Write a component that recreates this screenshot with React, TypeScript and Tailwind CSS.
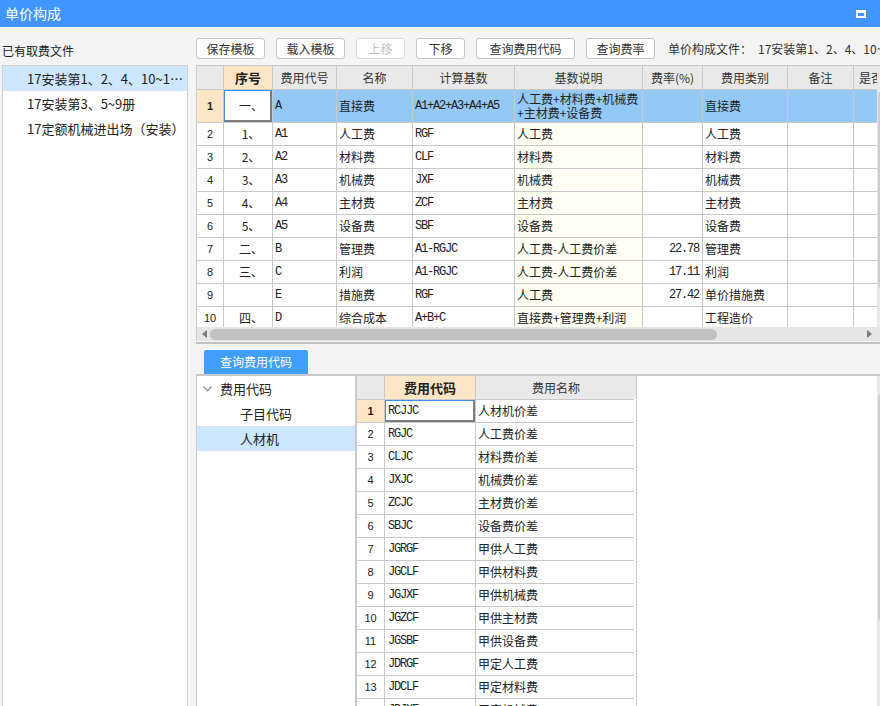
import React from "react"

const MONO = "font-['Liberation_Mono','Noto_Sans_CJK_SC',monospace] text-[12px] tracking-[-1.2px]"
const NUM = "font-['Liberation_Sans',sans-serif] text-[11px]"
const FOCUS = "bg-white shadow-[inset_1px_1px_0_#3d8fe8,inset_-2px_-2px_0_#7d7d7d]"

type Row = {
  seq: string
  code: string
  name: string
  base: string
  desc: React.ReactNode
  rate: string
  kind: string
}

const topRows: Row[] = [
  { seq: "一、", code: "A", name: "直接费", base: "A1+A2+A3+A4+A5", desc: <>人工费+材料费+机械费<br />+主材费+设备费</>, rate: "", kind: "直接费" },
  { seq: "1、", code: "A1", name: "人工费", base: "RGF", desc: "人工费", rate: "", kind: "人工费" },
  { seq: "2、", code: "A2", name: "材料费", base: "CLF", desc: "材料费", rate: "", kind: "材料费" },
  { seq: "3、", code: "A3", name: "机械费", base: "JXF", desc: "机械费", rate: "", kind: "机械费" },
  { seq: "4、", code: "A4", name: "主材费", base: "ZCF", desc: "主材费", rate: "", kind: "主材费" },
  { seq: "5、", code: "A5", name: "设备费", base: "SBF", desc: "设备费", rate: "", kind: "设备费" },
  { seq: "二、", code: "B", name: "管理费", base: "A1-RGJC", desc: "人工费-人工费价差", rate: "22.78", kind: "管理费" },
  { seq: "三、", code: "C", name: "利润", base: "A1-RGJC", desc: "人工费-人工费价差", rate: "17.11", kind: "利润" },
  { seq: "", code: "E", name: "措施费", base: "RGF", desc: "人工费", rate: "27.42", kind: "单价措施费" },
  { seq: "四、", code: "D", name: "综合成本", base: "A+B+C", desc: "直接费+管理费+利润", rate: "", kind: "工程造价" },
]

const codeRows = [
  ["RCJJC", "人材机价差"],
  ["RGJC", "人工费价差"],
  ["CLJC", "材料费价差"],
  ["JXJC", "机械费价差"],
  ["ZCJC", "主材费价差"],
  ["SBJC", "设备费价差"],
  ["JGRGF", "甲供人工费"],
  ["JGCLF", "甲供材料费"],
  ["JGJXF", "甲供机械费"],
  ["JGZCF", "甲供主材费"],
  ["JGSBF", "甲供设备费"],
  ["JDRGF", "甲定人工费"],
  ["JDCLF", "甲定材料费"],
  ["JDJXF", "甲定机械费"],
]

function Btn({ label, w, disabled }: { label: string; w: string; disabled?: boolean }) {
  return (
    <div
      className={`${w} h-[21px] shrink-0 flex items-center justify-center bg-white rounded-[3px] border text-[12px] ${
        disabled ? "border-[#dcdcdc] text-[#c4c4c4]" : "border-[#c6c6c6] text-[#333]"
      }`}
    >
      {label}
    </div>
  )
}

function HCell({ w, children, hot, left }: { w: string; children?: React.ReactNode; hot?: boolean; left?: boolean }) {
  return (
    <div
      className={`${w} shrink-0 h-full flex items-center border-r border-[#c9c9c9] overflow-hidden whitespace-nowrap ${
        left ? "justify-start pl-[5px]" : "justify-center"
      } ${hot ? "bg-[#fde6c6] font-bold text-[13px] text-[#222]" : "bg-[#e9e9e9] text-[12px] text-[#333]"}`}
    >
      {children}
    </div>
  )
}

function TopTable() {
  return (
    <div className="flex h-[261px]">
      <div className="w-[680px] shrink-0 overflow-hidden bg-white">
        <div className="w-[717px]">
          <div className="flex h-[24px] border-b border-[#c9c9c9]">
            <HCell w="w-[27px]" />
            <HCell w="w-[49px]" hot>序号</HCell>
            <HCell w="w-[64px]">费用代号</HCell>
            <HCell w="w-[76px]">名称</HCell>
            <HCell w="w-[102px]">计算基数</HCell>
            <HCell w="w-[128px]">基数说明</HCell>
            <HCell w="w-[60px]">费率(%)</HCell>
            <HCell w="w-[85px]">费用类别</HCell>
            <HCell w="w-[66px]">备注</HCell>
            <HCell w="w-[60px]" left>是否</HCell>
          </div>
          {topRows.map((r, i) => {
            const sel = i === 0
            return (
              <div
                key={i}
                className={`flex border-b border-[#c9c9c9] text-[12px] text-[#222] ${sel ? "h-[33px] bg-[#94c8f5]" : "h-[23px] bg-white"}`}
              >
                <div
                  className={`w-[27px] shrink-0 flex items-center justify-center border-r border-[#c9c9c9] ${NUM} ${
                    sel ? "bg-[#fde6c6] font-bold" : "bg-white"
                  }`}
                >
                  {i + 1}
                </div>
                <div className={`w-[49px] shrink-0 flex items-center justify-center border-r border-[#c9c9c9] ${sel ? FOCUS : ""}`}>
                  <span className="pl-[6px]">{r.seq}</span>
                </div>
                <div className={`w-[64px] shrink-0 flex items-center pl-[2px] border-r border-[#c9c9c9] ${MONO}`}>{r.code}</div>
                <div className="w-[76px] shrink-0 flex items-center pl-[2px] border-r border-[#c9c9c9]">{r.name}</div>
                <div className={`w-[102px] shrink-0 flex items-center pl-[2px] border-r border-[#c9c9c9] ${MONO}`}>{r.base}</div>
                <div
                  className={`w-[128px] shrink-0 flex items-center pl-[2px] border-r border-[#c9c9c9] leading-[14px] whitespace-nowrap ${
                    sel ? "" : "bg-[#fffff3]"
                  }`}
                >
                  <span>{r.desc}</span>
                </div>
                <div className={`w-[60px] shrink-0 flex items-center justify-end pr-[3px] border-r border-[#c9c9c9] ${MONO}`}>{r.rate}</div>
                <div className="w-[85px] shrink-0 flex items-center pl-[2px] border-r border-[#c9c9c9]">{r.kind}</div>
                <div className="w-[66px] shrink-0 border-r border-[#c9c9c9]" />
                <div className="w-[60px] shrink-0 border-r border-[#c9c9c9]" />
              </div>
            )
          })}
        </div>
      </div>
      <div className="w-[17px] shrink-0 bg-[#e8e8e8] pl-[1px] pt-[24px]">
        <div className="w-[12px] h-[200px] bg-[#cdcdcd] rounded-full" />
      </div>
    </div>
  )
}

function HScroll() {
  return (
    <div className="h-[14px] bg-[#e6e6e6] flex items-center">
      <svg width="5" height="8" viewBox="0 0 5 8" className="ml-[5px] shrink-0">
        <polygon points="5,0 0,4 5,8" fill="#7a7a7a" />
      </svg>
      <div className="ml-[3px] w-[507px] h-[11px] shrink-0 rounded-full bg-[#c1c1c1]" />
      <svg width="5" height="8" viewBox="0 0 5 8" className="ml-auto mr-[8px] shrink-0">
        <polygon points="0,0 5,4 0,8" fill="#7a7a7a" />
      </svg>
    </div>
  )
}

function CodeTable() {
  return (
    <div className="w-[277px]">
      <div className="flex h-[24px] border-b border-[#c9c9c9]">
        <HCell w="w-[28px]" />
        <HCell w="w-[91px]" hot>费用代码</HCell>
        <HCell w="w-[161px]">费用名称</HCell>
      </div>
      {codeRows.map(([code, name], i) => {
        const sel = i === 0
        return (
          <div key={code} className="flex h-[23px] border-b border-[#c9c9c9] text-[12px] text-[#222]">
            <div
              className={`w-[28px] shrink-0 flex items-center justify-center border-r border-[#c9c9c9] ${NUM} ${
                sel ? "bg-[#fde6c6] font-bold" : ""
              }`}
            >
              {i + 1}
            </div>
            <div className={`w-[91px] shrink-0 flex items-center pl-[3px] border-r border-[#c9c9c9] ${MONO} ${sel ? FOCUS : ""}`}>
              {code}
            </div>
            <div className="w-[161px] shrink-0 flex items-center pl-[2px] border-r border-[#c9c9c9]">{name}</div>
          </div>
        )
      })}
    </div>
  )
}

export default function App() {
  return (
    <div className="w-[880px] h-[706px] overflow-hidden bg-[#f4f4f4] flex flex-col text-[#222] font-['Noto_Sans_CJK_SC',sans-serif]">
      {/* title bar */}
      <div className="h-[27px] shrink-0 bg-[#4096fe] flex items-center justify-between pl-[5px] pr-[14px] text-white text-[14px]">
        <span>单价构成</span>
        <div className="w-[10px] h-[8px] border-2 border-t-[3px] border-white" />
      </div>

      <div className="flex flex-1 min-h-0">
        {/* left: fee files */}
        <div className="w-[196px] shrink-0 flex flex-col pl-[2px] pr-[8px]">
          <div className="h-[38px] shrink-0 pt-[15px] text-[12px] leading-[18px] text-[#222]">已有取费文件</div>
          <div className="flex-1 bg-white border border-b-0 border-[#d2d2d2] text-[13px] text-[#222]">
            <div className="h-[25px] flex items-center pl-[24px] bg-[#cce7ff] whitespace-nowrap">17安装第1、2、4、10~1…</div>
            <div className="h-[25px] flex items-center pl-[24px] whitespace-nowrap">17安装第3、5~9册</div>
            <div className="h-[25px] flex items-center pl-[24px] whitespace-nowrap">17定额机械进出场（安装）</div>
          </div>
        </div>

        {/* right */}
        <div className="flex-1 min-w-0 flex flex-col overflow-hidden">
          <div className="h-[38px] shrink-0 flex items-start pt-[11px] gap-[11px] whitespace-nowrap overflow-hidden">
            <Btn label="保存模板" w="w-[69px]" />
            <Btn label="载入模板" w="w-[69px]" />
            <Btn label="上移" w="w-[49px]" disabled />
            <Btn label="下移" w="w-[49px]" />
            <Btn label="查询费用代码" w="w-[99px]" />
            <Btn label="查询费率" w="w-[69px]" />
            <div className="ml-[2px] h-[21px] flex items-center text-[12px] text-[#333]">
              <span>单价构成文件：</span>
              <span className="ml-[6px]">17安装第1、2、4、10~12册</span>
            </div>
          </div>

          <div className="shrink-0 border-l border-t border-[#c9c9c9]">
            <TopTable />
            <HScroll />
          </div>
          <div className="h-[1px] shrink-0" />
          <div className="h-[2px] shrink-0 bg-[#c2c2c2]" />

          <div className="h-[30px] shrink-0 pt-[6px] pl-[8px]">
            <div className="w-[104px] h-[24px] flex items-center justify-center bg-[#409eff] rounded-t-[2px] text-white text-[12px]">
              查询费用代码
            </div>
          </div>

          <div className="flex-1 min-h-0 flex border-t-2 border-l border-[#c8c8c8]">
            <div className="w-[160px] shrink-0 bg-white border-r-2 border-[#c8c8c8] text-[13px] text-[#222]">
              <div className="h-[25px] flex items-center pl-[6px]">
                <svg width="9" height="6" viewBox="0 0 9 6" className="shrink-0">
                  <polyline points="0.5,0.5 4.5,4.8 8.5,0.5" fill="none" stroke="#8a8a8a" strokeWidth="1.2" />
                </svg>
                <span className="ml-[8px]">费用代码</span>
              </div>
              <div className="h-[25px] flex items-center pl-[43px]">子目代码</div>
              <div className="h-[25px] flex items-center pl-[43px] bg-[#cce7ff]">人材机</div>
            </div>
            <div className="w-[520px] shrink-0 bg-white overflow-hidden">
              <CodeTable />
            </div>
            <div className="w-[17px] shrink-0 bg-[#e8e8e8] pl-[1px] pt-[16px]">
              <div className="w-[12px] h-[231px] bg-[#cfcfcf] rounded-full" />
            </div>
          </div>
        </div>
      </div>
    </div>
  )
}
